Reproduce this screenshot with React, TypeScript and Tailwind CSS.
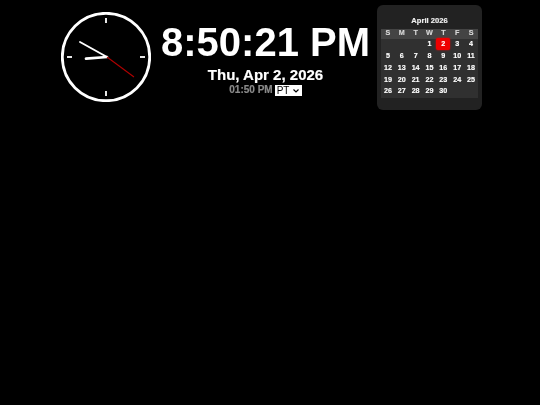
const head = ["S", "M", "T", "W", "T", "F", "S"];
const days: (number | null)[] = [null, null, null, 1, 2, 3, 4, 5, 6, 7, 8, 9, 10, 11, 12, 13, 14, 15, 16, 17, 18, 19, 20, 21, 22, 23, 24, 25, 26, 27, 28, 29, 30, null, null];

function Clock() {
  return (
    <svg width="90" height="90" viewBox="0 0 90 90" className="block shrink-0">
      <circle cx="45" cy="45" r="43.7" fill="none" stroke="#fff" strokeWidth="2.8" />
      <g stroke="#fff" strokeWidth="1.8">
        <line x1="45" y1="6" x2="45" y2="11" />
        <line x1="45" y1="79" x2="45" y2="84" />
        <line x1="6" y1="45" x2="11" y2="45" />
        <line x1="79" y1="45" x2="84" y2="45" />
      </g>
      <line x1="46" y1="45" x2="25" y2="46.7" stroke="#fff" strokeWidth="2.7" strokeLinecap="round" />
      <line x1="46" y1="45" x2="19" y2="30" stroke="#fff" strokeWidth="1.9" strokeLinecap="round" />
      <line x1="46" y1="45" x2="73" y2="65" stroke="#b00000" strokeWidth="1.1" />
    </svg>
  );
}

export default function App() {
  return (
    <div className="w-[540px] h-[405px] bg-black text-white font-['Liberation_Sans',Arial,sans-serif] overflow-hidden">
      <div className="flex items-start blur-[0.3px]">
        <div className="ml-[61px] mt-[12px]">
          <Clock />
        </div>
        <div className="w-[210px] ml-[9.5px] mt-[19px] flex flex-col items-center font-bold">
          <div className="text-[40px] leading-[46px] whitespace-nowrap">8:50:21 PM</div>
          <div className="text-[15px] leading-[17px] mt-[1px] whitespace-nowrap [-webkit-text-stroke:0.2px_#fff]">Thu, Apr 2, 2026</div>
          <div className="text-[10px] leading-[12px] mt-[1px] text-[#8a8a8a] flex items-center gap-[2px] whitespace-nowrap [-webkit-text-stroke:0.2px_#8a8a8a]">
            01:50 PM
            <span className="relative block w-[27px] h-[11px] [-webkit-text-stroke:0]">
              <select className="block appearance-none bg-white text-black text-[10px] font-normal h-[11px] w-[27px] leading-[11px] pl-[2px]">
                <option>PT</option>
              </select>
              <svg width="6" height="4" viewBox="0 0 6 4" className="absolute right-[3px] top-[4px]">
                <path d="M0.5 0.5 L3 3 L5.5 0.5" fill="none" stroke="#000" strokeWidth="1.2" />
              </svg>
            </span>
          </div>
        </div>
        <div className="ml-[6.5px] mt-[4.5px] w-[105px] h-[105.5px] rounded-[6px] bg-[#222222] px-[4px] pt-[11.5px] [-webkit-text-stroke:0.15px_currentColor]">
          <div className="text-[7.6px] leading-[10px] font-bold text-center text-[#f0f0f0]">April 2026</div>
          <div className="mt-[2.5px] grid grid-cols-7 bg-[#303030] text-[7.2px] font-bold">
            {head.map((d, i) => (
              <div key={i} className="h-[10px] bg-[#444444] flex items-center justify-center text-[#d8d8d8]">{d}</div>
            ))}
            {days.map((d, i) => (
              <div key={i} className="h-[11.85px] flex items-center justify-center text-white">
                {d === 2 ? (
                  <span className="w-[14px] h-[12px] rounded-[2px] bg-[#ee0000] text-white flex items-center justify-center shadow-[0_0_2px_#ee0000]">2</span>
                ) : d}
              </div>
            ))}
          </div>
        </div>
      </div>
    </div>
  );
}
